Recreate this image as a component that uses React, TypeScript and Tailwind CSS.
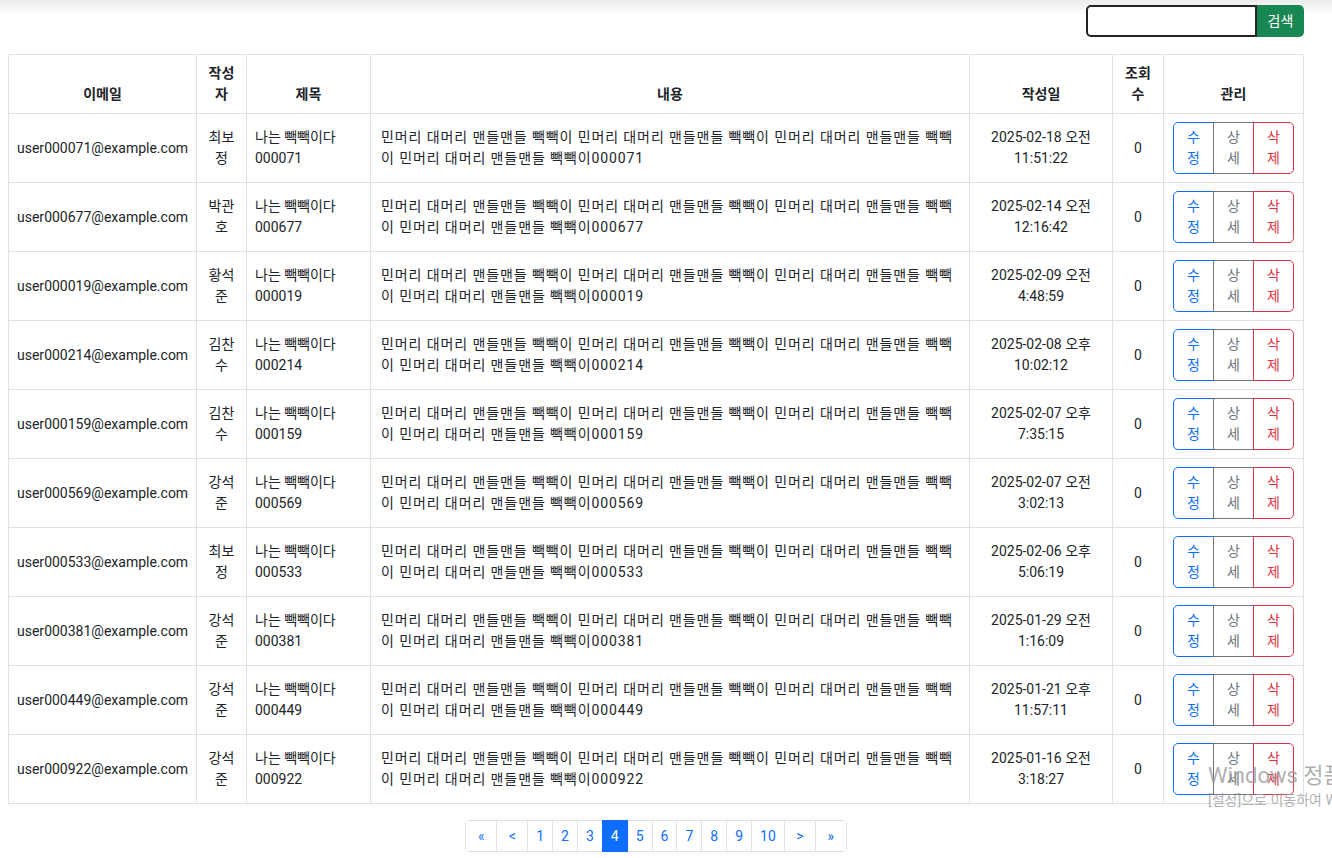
import { useState } from 'react'

type Post = {
  id: string
  writer: string
  date: string
  time: string
}

const posts: Post[] = [
  { id: '000071', writer: '최보정', date: '2025-02-18 오전', time: '11:51:22' },
  { id: '000677', writer: '박관호', date: '2025-02-14 오전', time: '12:16:42' },
  { id: '000019', writer: '황석준', date: '2025-02-09 오전', time: '4:48:59' },
  { id: '000214', writer: '김찬수', date: '2025-02-08 오후', time: '10:02:12' },
  { id: '000159', writer: '김찬수', date: '2025-02-07 오후', time: '7:35:15' },
  { id: '000569', writer: '강석준', date: '2025-02-07 오전', time: '3:02:13' },
  { id: '000533', writer: '최보정', date: '2025-02-06 오후', time: '5:06:19' },
  { id: '000381', writer: '강석준', date: '2025-01-29 오전', time: '1:16:09' },
  { id: '000449', writer: '강석준', date: '2025-01-21 오후', time: '11:57:11' },
  { id: '000922', writer: '강석준', date: '2025-01-16 오전', time: '3:18:27' },
]

const body = '민머리 대머리 맨들맨들 빽빽이 민머리 대머리 맨들맨들 빽빽이 민머리 대머리 맨들맨들 빽빽이 민머리 대머리 맨들맨들 빽빽이'

const pages = ['«', '<', '1', '2', '3', '4', '5', '6', '7', '8', '9', '10', '>', '»']

export default function App() {
  const [q, setQ] = useState('')
  const current = '4'

  const th = 'border border-[#dee2e6] px-2 py-2 font-bold text-center align-bottom'
  const td = 'border border-[#dee2e6] px-2 py-2 align-middle'

  return (
    <div
      className="relative min-h-[858px] overflow-hidden bg-[linear-gradient(to_bottom,#ececec,#ffffff_16px)] text-[14px] leading-[21px] text-[#212529]"
      style={{ fontFamily: 'Roboto, "Noto Sans CJK KR", sans-serif' }}
    >
      <div className="ml-2 w-[1296px]">
        <div className="flex justify-end pt-[5px]">
          <input
            value={q}
            onChange={e => setQ(e.target.value)}
            className="h-[32px] w-[171px] rounded-l-[5px] border-2 border-[#212529] bg-white px-2 outline-none"
          />
          <button className="h-[32px] w-[47px] rounded-r-[5px] bg-[#198754] text-white">검색</button>
        </div>

        <table className="mt-[17px] w-[1295px] table-fixed border-collapse">
          <colgroup>
            <col className="w-[188px]" />
            <col className="w-[50px]" />
            <col className="w-[124px]" />
            <col className="w-[599px]" />
            <col className="w-[143px]" />
            <col className="w-[51px]" />
            <col className="w-[140px]" />
          </colgroup>
          <thead>
            <tr>
              <th className={th}>이메일</th>
              <th className={th}>작성자</th>
              <th className={th}>제목</th>
              <th className={th}>내용</th>
              <th className={th}>작성일</th>
              <th className={th}>조회수</th>
              <th className={th}>관리</th>
            </tr>
          </thead>
          <tbody>
            {posts.map(p => (
              <tr key={p.id}>
                <td className={`${td} text-center`}>user{p.id}@example.com</td>
                <td className={`${td} text-center`}>{p.writer}</td>
                <td className={td}>나는 빽빽이다 {p.id}</td>
                <td className={`${td} pl-[10px] tracking-[0.9px]`}>{body}{p.id}</td>
                <td className={`${td} text-center`}>{p.date} {p.time}</td>
                <td className={`${td} text-center`}>0</td>
                <td className={td}>
                  <div className="flex justify-center">
                    <button className="w-[41px] rounded-l-[5px] border border-[#0d6efd] px-2 py-1 text-[#0d6efd]">수정</button>
                    <button className="-ml-px w-[41px] border border-[#6c757d] px-2 py-1 text-[#6c757d]">상세</button>
                    <button className="-ml-px w-[41px] rounded-r-[5px] border border-[#dc3545] px-2 py-1 text-[#dc3545]">삭제</button>
                  </div>
                </td>
              </tr>
            ))}
          </tbody>
        </table>

        <div className="mt-[16px] flex justify-center">
          <ul className="flex">
            {pages.map((pg, i) => {
              const active = pg === current
              const arrow = isNaN(Number(pg))
              return (
                <li key={pg + i} className={i === 0 ? '' : '-ml-px'}>
                  <a
                    className={`flex h-[32px] items-center justify-center border px-2 ${arrow ? 'w-[32px]' : ''} ${
                      i === 0 ? 'rounded-l-[4px]' : ''
                    } ${i === pages.length - 1 ? 'rounded-r-[4px]' : ''} ${
                      active ? 'relative z-10 border-[#0d6efd] bg-[#0d6efd] text-white' : 'border-[#dee2e6] bg-white text-[#0d6efd]'
                    }`}
                  >
                    {pg}
                  </a>
                </li>
              )
            })}
          </ul>
        </div>
      </div>

      {/* windows activation watermark */}
      <div className="pointer-events-none absolute left-[1208px] top-[762px] whitespace-nowrap text-[#9a9a9a]/80">
        <div className="text-[22px] leading-[28px]">Windows 정품 인증</div>
        <div className="text-[14px] leading-[20px]">[설정]으로 이동하여 Windows를 정품 인증합니다.</div>
      </div>
    </div>
  )
}
